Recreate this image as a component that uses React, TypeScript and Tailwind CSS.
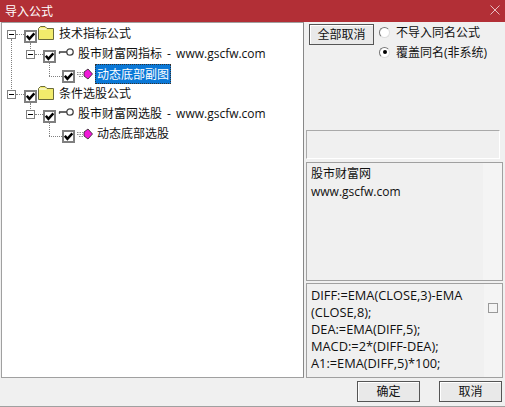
const cjk = "font-['Open_Sans','Noto_Sans_CJK_SC',sans-serif]";

function Expander() {
  return (
    <span className="flex h-[9px] w-[9px] shrink-0 items-center justify-center border border-[#808080] bg-white">
      <span className="h-px w-[5px] bg-black" />
    </span>
  );
}

function Check() {
  return (
    <span className="mt-[4px] flex h-[13px] w-[13px] shrink-0 items-center justify-center border-2 border-[#7f7f7f] bg-white">
      <svg width="9" height="9" viewBox="0 0 9 9">
        <path d="M0.8 3.8 L3.4 6.8 L8.4 1.4" fill="none" stroke="#000" strokeWidth="2.5" />
      </svg>
    </span>
  );
}

function Folder() {
  return (
    <svg width="16" height="14" viewBox="0 0 16 14" className="mb-[2px] shrink-0">
      <path d="M0.5 13.5 V2.5 L2.5 0.5 H7 L9 2.5 H15.5 V13.5 Z" fill="#f2ec6c" stroke="#6b6b3a" />
      <path d="M1 3 H8.5" stroke="#fff" />
    </svg>
  );
}

function Key() {
  return (
    <svg width="16" height="10" viewBox="0 0 16 10" className="mb-[4px] shrink-0">
      <circle cx="12" cy="5" r="3.2" fill="#fff" stroke="#444" strokeWidth="1.3" />
      <path d="M1 5 H9" fill="none" stroke="#444" strokeWidth="1.6" />
      <path d="M1.5 5 V6.8" fill="none" stroke="#444" strokeWidth="1.3" />
    </svg>
  );
}

function Gem() {
  return (
    <svg width="16" height="12" viewBox="0 0 16 12" className="shrink-0">
      <path d="M0 4.5 H6 M0 6.5 H6 M2 8.5 H6" stroke="#8f8f8f" strokeWidth="1" strokeDasharray="1.5 1" />
      <path d="M11 1 L15.5 6 L11 11 L7 8 V4 Z" fill="#f019d8" stroke="#222" strokeWidth="0.8" />
    </svg>
  );
}

function Row({ indent, children }: { indent: string; children: React.ReactNode }) {
  return <div className={`flex h-5 items-center ${indent}`}>{children}</div>;
}

function Dash({ w, mt }: { w: string; mt?: string }) {
  return <span className={`h-0 shrink-0 border-t border-dotted border-[#808080] ${w} ${mt ?? ""}`} />;
}

function GroupLines({ tall }: { tall?: boolean }) {
  return (
    <>
      {tall && <span className="absolute left-[9px] top-[15px] h-[54px] border-l border-dotted border-[#808080]" />}
      <span className="absolute left-[28px] top-[19px] h-[8px] border-l border-dotted border-[#808080]" />
      <span className="absolute left-[47px] top-[39px] h-[13px] border-l border-dotted border-[#808080]" />
    </>
  );
}

function Group(props: { title: string; sub: string; leaf: string; selected?: boolean; tall?: boolean }) {
  return (
    <div className="relative">
      <GroupLines tall={props.tall} />
      <Row indent="pl-[5px]">
        <Expander />
        <Dash w="w-[8px]" />
        <Check />
        <span className="ml-[1px] flex">
          <Folder />
        </span>
        <span className="mb-[2px] ml-[5px]">{props.title}</span>
      </Row>
      <Row indent="pl-[24px]">
        <Expander />
        <Dash w="w-[8px]" />
        <Check />
        <span className="ml-[2px] flex">
          <Key />
        </span>
        <span className="mb-[2px] ml-[4px] [word-spacing:2px]">{props.sub}</span>
      </Row>
      <Row indent="pl-[47px]">
        <Dash w="w-[13px]" mt="mt-[4px]" />
        <Check />
        <span className="ml-[2px] flex">
          <Gem />
        </span>
        {props.selected ? (
          <span className="ml-[2px] flex h-[20px] items-center border border-dotted border-[#333] bg-[#0a78d7] px-[1px] text-white">
            {props.leaf}
          </span>
        ) : (
          <span className="mb-[1px] ml-[4px]">{props.leaf}</span>
        )}
      </Row>
    </div>
  );
}

function Radio({ on, children }: { on?: boolean; children: React.ReactNode }) {
  return (
    <div className="flex h-5 items-center gap-[6px]">
      <span className="flex h-[11px] w-[11px] items-center justify-center rounded-full border border-t-[#777] border-l-[#777] border-r-[#ddd] border-b-[#ddd] bg-white">
        {on && <span className="h-[4px] w-[4px] rounded-full bg-black" />}
      </span>
      <span>{children}</span>
    </div>
  );
}

function Btn({ children, width, className }: { children: React.ReactNode; width: string; className?: string }) {
  return (
    <button className={`h-[21px] ${width} ${className ?? ""} border border-[#555] bg-[#e9e9e9] text-[12px] text-[#111] shadow-[inset_1px_1px_0_#fff]`}>
      {children}
    </button>
  );
}

export default function App() {
  return (
    <div className={`flex h-[407px] w-[505px] flex-col overflow-hidden border-b border-[#a0a0a0] bg-[#f0f0f0] text-[12px] leading-[17px] text-[#111] ${cjk}`}>
      <div className="flex h-[22px] shrink-0 items-center justify-between bg-[#b22f36] pl-[5px] pr-[5px] text-white">
        <span>导入公式</span>
        <svg width="10" height="10" viewBox="0 0 10 10" className="mb-[3px]">
          <path d="M0.5 0.5 L9.5 9.5 M9.5 0.5 L0.5 9.5" stroke="#edd0d2" strokeWidth="0.9" />
        </svg>
      </div>

      <div className="flex min-h-0 flex-1 pl-[1px] pr-[2px]">
        <div className="mr-[2px] h-[356px] w-[303px] overflow-hidden border border-[#a0a0a0] border-r-[#888] bg-white pt-[1px]">
          <Group title="技术指标公式" sub="股市财富网指标 - www.gscfw.com" leaf="动态底部副图" selected tall />
          <Group title="条件选股公式" sub="股市财富网选股 - www.gscfw.com" leaf="动态底部选股" />
        </div>

        <div className="flex w-[197px] flex-col">
          <div className="flex h-[108px] shrink-0 items-start pl-[3px]">
            <Btn width="w-[65px]" className="mt-[2px]">全部取消</Btn>
            <div className="ml-[5px]">
              <Radio>不导入同名公式</Radio>
              <Radio on>覆盖同名(非系统)</Radio>
            </div>
          </div>

          <div className="h-[29px] w-[194px] shrink-0 border border-[#a9a9a9] border-r-white border-b-white bg-[#f0f0f0]" />

          <div className="mt-[3px] flex h-[119px] shrink-0 border border-[#a0a0a0] bg-[#f0f0f0]">
            <div className="flex-1 whitespace-pre-line pl-[4px] pt-[2px] leading-[18px]">{"股市财富网\nwww.gscfw.com"}</div>
            <div className="w-[19px] bg-[#f4f4f4]" />
          </div>

          <div className="mt-[2px] flex h-[95px] shrink-0 border border-[#a0a0a0] bg-[#f0f0f0]">
            <div className="w-[177px] pl-[4px] pt-[3px] text-[12.8px] leading-[17px]">
              DIFF:=EMA(CLOSE,3)-EMA
              <br />
              (CLOSE,8);
              <br />
              DEA:=EMA(DIFF,5);
              <br />
              MACD:=2*(DIFF-DEA);
              <br />
              A1:=EMA(DIFF,5)*100;
            </div>
            <div className="flex w-[18px] justify-center bg-[#f4f4f4] pt-[19px]">
              <span className="h-[10px] w-[10px] border border-[#999]" />
            </div>
          </div>
        </div>
      </div>

      <div className="flex h-[28px] shrink-0 justify-end gap-[19px] pr-[3px] pt-[3px]">
        <Btn width="w-[63px]">确定</Btn>
        <Btn width="w-[63px]">取消</Btn>
      </div>
    </div>
  );
}
